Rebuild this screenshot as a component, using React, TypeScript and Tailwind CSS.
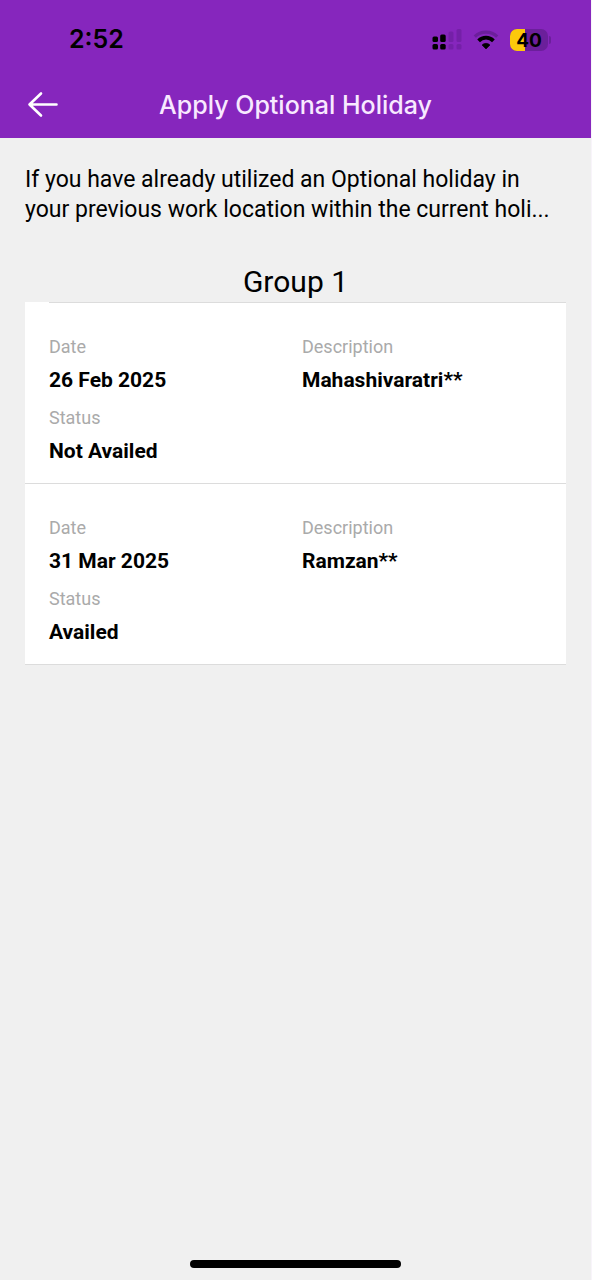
import React from "react";

type Holiday = { date: string; description: string; status: string };

const holidays: Holiday[] = [
  { date: "26 Feb 2025", description: "Mahashivaratri**", status: "Not Availed" },
  { date: "31 Mar 2025", description: "Ramzan**", status: "Availed" },
];

function SignalIcon() {
  return (
    <svg width="30" height="22" viewBox="0 0 30 22" aria-hidden="true">
      <g className="fill-black">
        <rect x="0.5" y="7.5" width="5.5" height="5.5" rx="1.5" />
        <rect x="8.2" y="5.5" width="5.5" height="7.5" rx="1.5" />
        <rect x="0.5" y="15" width="5.5" height="5.5" rx="1.5" />
        <rect x="8.2" y="15" width="5.5" height="5.5" rx="1.5" />
      </g>
      <g className="fill-[#7420a8]">
        <rect x="16.5" y="2.5" width="5" height="10.5" rx="1.5" />
        <rect x="24.5" y="0" width="5" height="13" rx="1.5" />
        <rect x="16.5" y="15" width="5" height="5.5" rx="1.5" />
        <rect x="24.5" y="15" width="5" height="5.5" rx="1.5" />
      </g>
    </svg>
  );
}

function WifiIcon() {
  return (
    <svg width="26" height="20" viewBox="0 0 26 20" fill="none" aria-hidden="true">
      <path d="M1.8 6.6 A16 16 0 0 1 24.2 6.6" stroke="#6b1f9b" strokeWidth="3.2" />
      <path d="M5.6 10.8 A10.4 10.4 0 0 1 20.4 10.8" stroke="#000" strokeWidth="3.8" />
      <path d="M13 19 L9 15 A5.7 5.7 0 0 1 17 15 Z" fill="#000" stroke="#000" strokeWidth="0.6" strokeLinejoin="round" />
    </svg>
  );
}

function Battery({ level }: { level: number }) {
  return (
    <div className="flex items-center gap-px" role="img" aria-label={`Battery ${level}%`}>
      <div className="relative flex h-[22px] w-[38px] items-center justify-center overflow-hidden rounded-[7px] bg-[#6b1f9b]">
        <div className="absolute inset-y-0 left-0 bg-[#fcc90b]" style={{ width: `${level}%` }} />
        <span className="relative font-[Inter,sans-serif] text-[19px] leading-none font-bold text-black">{level}</span>
      </div>
      <div className="h-2 w-0.5 rounded-r bg-[#6b1f9b]" />
    </div>
  );
}

function Field({ label, value }: { label: string; value: string }) {
  return (
    <div>
      <dt className="text-lg leading-6 text-[#aaaaaa]">{label}</dt>
      <dd className="mt-[7px] text-[21px] leading-7 font-bold text-black">{value}</dd>
    </div>
  );
}

function HolidayRow({ holiday }: { holiday: Holiday }) {
  return (
    <li className="border-b border-[#dcdcdc] bg-white px-6 pt-8 pb-[18px]">
      <dl className="grid grid-cols-[253px_1fr] gap-y-3">
        <Field label="Date" value={holiday.date} />
        <Field label="Description" value={holiday.description} />
        <Field label="Status" value={holiday.status} />
      </dl>
    </li>
  );
}

export default function App() {
  return (
    <div className="flex min-h-screen flex-col border-r border-[#f8f4fa] bg-[#f0f0f0] font-[Roboto,sans-serif] text-black">
      <header className="bg-[#8626bd]">
        <div className="flex h-[72px] items-center justify-between pt-2 pr-10 pl-[69px]">
          <time className="font-[Inter,sans-serif] text-[25px] font-semibold">2:52</time>
          <div className="flex items-center gap-[11px]">
            <SignalIcon />
            <WifiIcon />
            <Battery level={40} />
          </div>
        </div>
        <div className="grid h-[66px] grid-cols-[64px_1fr_64px] items-center">
          <button type="button" aria-label="Back" className="flex justify-center pl-[22px]">
            <svg width="32" height="28" viewBox="0 0 32 28" fill="none" stroke="#fff" strokeWidth="2.6" strokeLinecap="round" strokeLinejoin="round" aria-hidden="true">
              <path d="M29.5 13.5H2.5M14 2.5L2.5 13.5L14 24.5" />
            </svg>
          </button>
          <h1 className="text-center font-[Inter,sans-serif] text-[25px] leading-8 font-medium text-[#f8e9ff]">
            Apply Optional Holiday
          </h1>
        </div>
      </header>
      <main className="flex-1 px-[25px] pt-[27px]">
        <p className="text-[23px] leading-[30px]">
          If you have already utilized an Optional holiday in your previous work location within the current holi...
        </p>
        <section className="mt-[39px]">
          <h2 className="pb-0.5 text-center text-3xl leading-9">Group 1</h2>
          <div className="bg-white pl-6">
            <div className="h-px bg-[#dcdcdc]" />
          </div>
          <ul>
            {holidays.map((holiday) => (
              <HolidayRow key={holiday.date} holiday={holiday} />
            ))}
          </ul>
        </section>
      </main>
      <footer className="flex justify-center pb-3">
        <div className="h-2 w-[211px] rounded-full bg-black" />
      </footer>
    </div>
  );
}
